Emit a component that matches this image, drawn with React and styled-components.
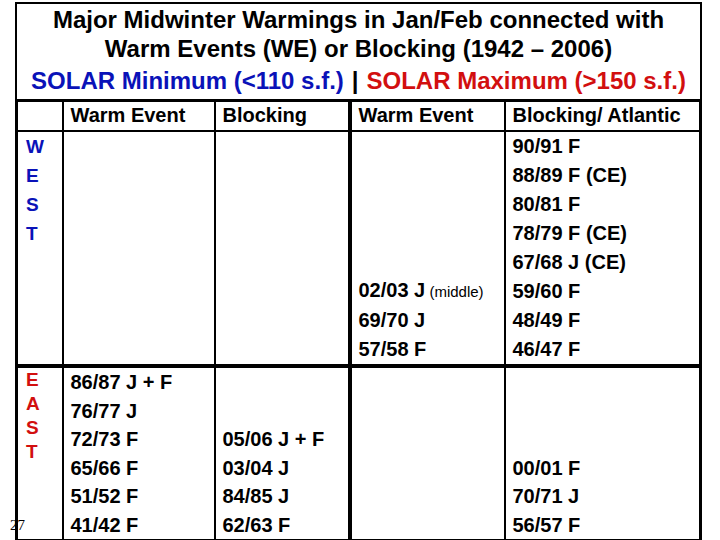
import React from 'react';
import styled, { createGlobalStyle } from 'styled-components';

const GlobalStyle = createGlobalStyle`
  html, body {
    margin: 0;
    padding: 0;
    background: #fff;
  }
  body {
    font-family: "Liberation Sans", Arial, sans-serif;
    color: #000;
  }
`;

const westRows = {
  warmMin: [],
  blockMin: [],
  warmMax: [
    { text: '02/03 J', note: '(middle)' },
    { text: '69/70 J' },
    { text: '57/58 F' },
  ],
  blockMax: [
    { text: '90/91 F' },
    { text: '88/89 F (CE)' },
    { text: '80/81 F' },
    { text: '78/79 F (CE)' },
    { text: '67/68 J (CE)' },
    { text: '59/60 F' },
    { text: '48/49 F' },
    { text: '46/47 F' },
  ],
};

const eastRows = {
  warmMin: [
    { text: '86/87 J + F' },
    { text: '76/77 J' },
    { text: '72/73 F' },
    { text: '65/66 F' },
    { text: '51/52 F' },
    { text: '41/42 F' },
  ],
  blockMin: [
    { text: '05/06 J + F' },
    { text: '03/04 J' },
    { text: '84/85 J' },
    { text: '62/63 F' },
  ],
  warmMax: [],
  blockMax: [{ text: '00/01 F' }, { text: '70/71 J' }, { text: '56/57 F' }],
};

export default function App() {
  return (
    <Slide>
      <GlobalStyle />
      <Frame>
        <TitleBox>
          <TitleLine>Major Midwinter Warmings in Jan/Feb connected with</TitleLine>
          <TitleLine>Warm Events (WE) or Blocking (1942 – 2006)</TitleLine>
          <SolarLine>
            <Solar $tone="min">SOLAR Minimum (&lt;110 s.f.)</Solar>
            <Bar>|</Bar>
            <Solar $tone="max">SOLAR Maximum (&gt;150 s.f.)</Solar>
          </SolarLine>
        </TitleBox>
        <Table>
          <colgroup>
            <col style={{ width: 46 }} />
            <col style={{ width: 152 }} />
            <col style={{ width: 135 }} />
            <col style={{ width: 155 }} />
            <col />
          </colgroup>
          <thead>
            <HeadRow>
              <Th />
              <Th>Warm Event</Th>
              <Th $thickRight>Blocking</Th>
              <Th>Warm Event</Th>
              <Th>Blocking/ Atlantic</Th>
            </HeadRow>
          </thead>
          <tbody>
            <RegionRow $height={232}>
              <LabelCell>
                <Letters $tone="min" $pitch={29} $top={0}>
                  {'WEST'.split('').map(l => <span key={l}>{l}</span>)}
                </Letters>
              </LabelCell>
              <DataCell><Entries items={westRows.warmMin} /></DataCell>
              <DataCell $thickRight><Entries items={westRows.blockMin} /></DataCell>
              <DataCell><Entries items={westRows.warmMax} /></DataCell>
              <DataCell><Entries items={westRows.blockMax} /></DataCell>
            </RegionRow>
            <RegionRow $height={175} $thickTop>
              <LabelCell>
                <Letters $tone="max" $pitch={24} $top={0}>
                  {'EAST'.split('').map(l => <span key={l}>{l}</span>)}
                </Letters>
                <PageNo>27</PageNo>
              </LabelCell>
              <DataCell><Entries items={eastRows.warmMin} pitch={28.5} /></DataCell>
              <DataCell $thickRight><Entries items={eastRows.blockMin} pitch={28.5} /></DataCell>
              <DataCell><Entries items={eastRows.warmMax} pitch={28.5} /></DataCell>
              <DataCell><Entries items={eastRows.blockMax} pitch={28.5} /></DataCell>
            </RegionRow>
          </tbody>
        </Table>
      </Frame>
    </Slide>
  );
}

function Entries({ items, pitch = 29 }) {
  return (
    <EntryList $pitch={pitch}>
      {items.map(item => (
        <Entry key={item.text}>
          {item.text}
          {item.note && <Note> {item.note}</Note>}
        </Entry>
      ))}
    </EntryList>
  );
}

const Slide = styled.div`
  width: 720px;
  height: 540px;
  overflow: hidden;
  background: #fff;
`;

const Frame = styled.div`
  width: 687px;
  margin: 2px 0 0 15px;
`;

const TitleBox = styled.div`
  height: 97px;
  box-sizing: border-box;
  border: 2px solid #000;
  border-bottom: none;
  padding-top: 1px;
  display: flex;
  flex-direction: column;
  align-items: center;
`;

const TitleLine = styled.div`
  font-size: 24px;
  font-weight: bold;
  line-height: 29px;
  white-space: nowrap;
`;

const SolarLine = styled(TitleLine)`
  margin-top: 2px;
  line-height: 31px;
  display: flex;
  gap: 8px;
`;

const Solar = styled.span`
  color: ${p => (p.$tone === 'min' ? '#0a12b8' : '#d20f0f')};
`;

const Bar = styled.span`
  color: #000;
`;

const Table = styled.table`
  width: 687px;
  table-layout: fixed;
  border-collapse: collapse;
  border: 3px solid #000;
  font-size: 20px;
  font-weight: bold;
`;

const HeadRow = styled.tr`
  height: 30px;
`;

const Th = styled.th`
  text-align: left;
  font-weight: bold;
  padding: 0 0 0 7px;
  border: 2px solid #000;
  border-right-width: ${p => (p.$thickRight ? '4px' : '2px')};
  white-space: nowrap;
  vertical-align: middle;
`;

const RegionRow = styled.tr`
  height: ${p => p.$height}px;
  border-top: ${p => (p.$thickTop ? '4px solid #000' : 'none')};
`;

const LabelCell = styled.td`
  position: relative;
  vertical-align: top;
  padding: 0 0 0 8px;
  border: 2px solid #000;
`;

const Letters = styled.div`
  display: flex;
  flex-direction: column;
  padding-top: ${p => p.$top}px;
  color: ${p => (p.$tone === 'min' ? '#0a12b8' : '#d20f0f')};
  line-height: ${p => p.$pitch}px;
  font-size: 19px;
`;

const PageNo = styled.span`
  position: absolute;
  z-index: 1;
  left: -8px;
  bottom: 6px;
  font-family: "Liberation Serif", "Times New Roman", serif;
  font-weight: normal;
  font-size: 15px;
  line-height: 15px;
  color: #000;
`;

const DataCell = styled.td`
  vertical-align: bottom;
  padding: 0 0 0 7px;
  border: 2px solid #000;
  border-right-width: ${p => (p.$thickRight ? '4px' : '2px')};
`;

const EntryList = styled.div`
  display: flex;
  flex-direction: column;
  line-height: ${p => p.$pitch}px;
  white-space: nowrap;
`;

const Entry = styled.div``;

const Note = styled.span`
  font-size: 15px;
  font-weight: normal;
`;
